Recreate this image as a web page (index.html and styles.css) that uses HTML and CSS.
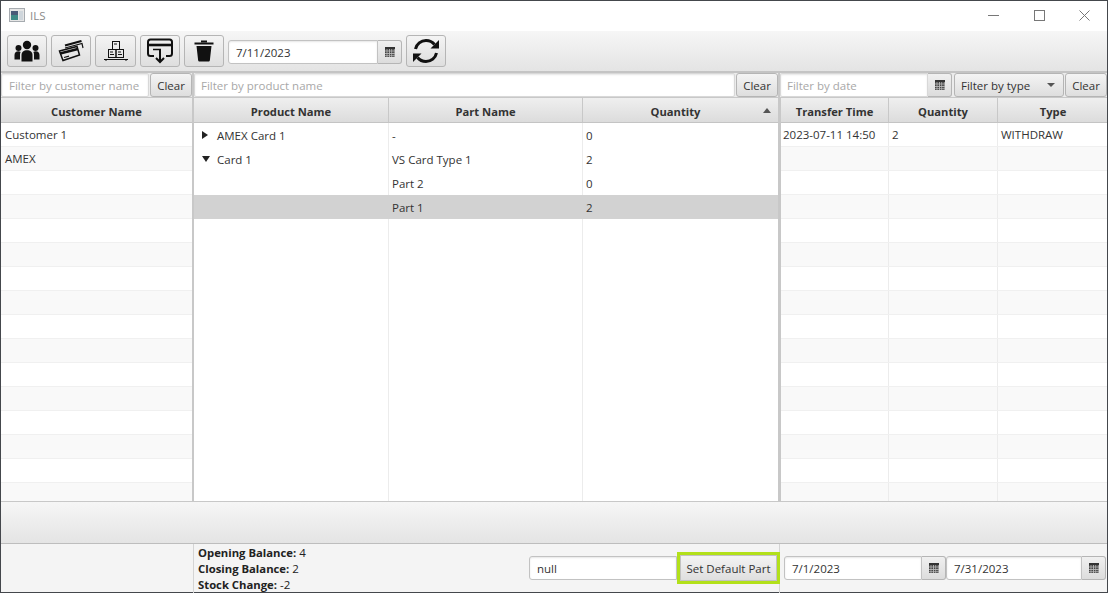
FILE: index.html
```html
<!DOCTYPE html>
<html lang="en">
<head>
<meta charset="utf-8">
<title>ILS</title>
<link rel="stylesheet" href="styles.css">
</head>
<body>
<svg class="defs" width="0" height="0" aria-hidden="true">
  <defs>
    <pattern id="calgrid" x="0" y="2" width="2.4" height="2.4" patternUnits="userSpaceOnUse"><rect width="1.6" height="1.6" fill="#444"/></pattern>
    <symbol id="cal" viewBox="0 0 10 10"><rect x="0" y="0" width="10" height="2" fill="#333"/><rect x="0" y="2" width="10" height="8" fill="#bbb"/><rect x="0" y="2" width="10" height="8" fill="url(#calgrid)"/></symbol>
  </defs>
</svg>
<div class="window">
  <header class="titlebar">
    <svg class="appicon" width="16" height="14" viewBox="0 0 16 14"><rect x="0.5" y="0.5" width="15" height="13" fill="#e6e6e6" stroke="#a6abb0"/><rect x="2" y="3" width="7" height="9" fill="#3f8a86"/><rect x="2" y="3" width="7" height="4" fill="#4a5a78"/><rect x="10" y="3" width="4" height="9" fill="#cfd6dc"/></svg>
    <span class="apptitle">ILS</span>
    <div class="winbtns">
      <svg width="11" height="11" viewBox="0 0 11 11"><path d="M0 5.500h11" stroke="#777" fill="none"/></svg>
      <svg width="11" height="11" viewBox="0 0 11 11"><rect x="0.500" y="0.500" width="10" height="10" stroke="#777" fill="none"/></svg>
      <svg width="11" height="11" viewBox="0 0 11 11"><path d="M0.500 0.500l10 10M10.500 0.500l-10 10" stroke="#777" fill="none"/></svg>
    </div>
  </header>

  <div class="toolbar">
    <button class="btn iconbtn w40">
      <svg width="26" height="22" viewBox="0 0 26 22" fill="#111"><circle cx="13" cy="5" r="4.200"/><circle cx="4.500" cy="8" r="3"/><circle cx="21.500" cy="8" r="3"/><path d="M7.500 21.500V15c0-3 2.200-4.700 5.500-4.700s5.500 1.700 5.500 4.700v6.500z"/><path d="M0.500 19.500V15c0-2.500 1.500-3.800 3.800-3.800 1 0 1.700.3 2.300.8C6 13 6 14 6 15v4.500z"/><path d="M25.500 19.500V15c0-2.500-1.500-3.800-3.800-3.800-1 0-1.700.3-2.300.8.600 1 .600 2 .600 3v4.500z"/></svg>
    </button>
    <button class="btn iconbtn w40">
      <svg width="26" height="22" viewBox="0 0 26 22" fill="none" stroke="#111"><path d="M7 5.500 23.500 1" stroke-width="2.200"/><path d="M7 8 24 3.500l1 4.500" stroke-width="1.200"/><path d="M1.500 11 19 6.500l2.500 8.500L5 20.500z" fill="#e8e8e8" stroke-width="1.500"/><path d="M2 13.500 19.800 9" stroke-width="2.500"/><path d="M6 17.500l5-1.300" stroke-width="1.200"/></svg>
    </button>
    <button class="btn iconbtn w41">
      <svg width="24" height="22" viewBox="0 0 24 22" fill="none" stroke="#111"><rect x="8.500" y="1.500" width="7" height="8"/><rect x="4.500" y="9.500" width="7.500" height="8"/><rect x="12" y="9.500" width="7.500" height="8"/><path d="M10 4h3M6 12h3M14 12h3M6 14.500h4M14 14.500h4M0 19.500h24M2 21v-1.500M22 21v-1.500"/></svg>
    </button>
    <button class="btn iconbtn w40">
      <svg width="26" height="26" viewBox="0 0 26 26" fill="none" stroke="#111" stroke-width="2"><path d="M7 18H3.500C2 18 1 17 1 15.500V4C1 2.500 2 1.500 3.500 1.500h19C24 1.500 25 2.500 25 4v11.500c0 1.500-1 2.500-2.500 2.500H19"/><path d="M1 7h24" stroke-width="2.600"/><path d="M6 11.500h8" stroke-width="1.500"/><path d="M13 11v13M9 20l4 4 4-4"/></svg>
    </button>
    <button class="btn iconbtn w40">
      <svg width="20" height="22" viewBox="0 0 20 22"><rect x="0.500" y="2.500" width="19" height="2" fill="#111"/><rect x="7" y="0.500" width="6" height="2" fill="#111"/><path d="M2.500 6h15l-1.600 14c-.1 1-.7 1.500-1.600 1.500H5.700c-.9 0-1.500-.5-1.600-1.500z" fill="#111"/></svg>
    </button>
    <div class="datepicker w174">
      <span class="field value">7/11/2023</span>
      <span class="calbtn"><svg class="calicon"><use href="#cal"/></svg></span>
    </div>
    <button class="btn iconbtn w40">
      <svg width="28" height="26" viewBox="0 0 28 26" fill="none" stroke="#111" stroke-width="3"><path d="M3.500 11C4.500 6 9 2.500 14 2.500c3.500 0 6.500 1.500 8.500 4"/><path d="M24.500 15c-1 5-5.500 8.500-10.500 8.500-3.500 0-6.500-1.500-8.500-4"/><path d="M27 2v8.500h-8.500z" fill="#111" stroke="none"/><path d="M1 24v-8.500h8.500z" fill="#111" stroke="none"/></svg>
    </button>
  </div>

  <main class="panes">
    <section class="pane">
      <div class="filters">
        <span class="field ghost grow">Filter by customer name</span>
        <button class="btn small clear">Clear</button>
      </div>
      <div class="thead cols-1">
        <span class="th">Customer Name</span>
      </div>
      <div class="tbody cols-1 striped">
        <div class="row"><span class="td">Customer 1</span></div>
        <div class="row"><span class="td">AMEX</span></div>
        <div class="row"></div><div class="row"></div><div class="row"></div><div class="row"></div>
        <div class="row"></div><div class="row"></div><div class="row"></div><div class="row"></div>
        <div class="row"></div><div class="row"></div><div class="row"></div><div class="row"></div>
        <div class="row"></div><div class="row"></div>
      </div>
    </section>

    <section class="pane">
      <div class="filters filters-mid">
        <span class="field ghost grow">Filter by product name</span>
        <button class="btn small clear">Clear</button>
      </div>
      <div class="thead cols-3">
        <span class="th">Product Name</span>
        <span class="th">Part Name</span>
        <span class="th sorted">Quantity<i class="sortarrow"></i></span>
      </div>
      <div class="tbody cols-3 plain">
        <div class="row"><span class="td tree"><i class="arrow right"></i>AMEX Card 1</span><span class="td">-</span><span class="td">0</span></div>
        <div class="row"><span class="td tree"><i class="arrow down"></i>Card 1</span><span class="td">VS Card Type 1</span><span class="td">2</span></div>
        <div class="row"><span class="td"></span><span class="td">Part 2</span><span class="td">0</span></div>
        <div class="row selected"><span class="td"></span><span class="td">Part 1</span><span class="td">2</span></div>
        <div class="row filler"><span class="td"></span><span class="td"></span><span class="td"></span></div>
      </div>
    </section>

    <section class="pane">
      <div class="filters filters-right">
        <span class="datepicker grow"><span class="field ghost">Filter by date</span><span class="calbtn"><svg class="calicon"><use href="#cal"/></svg></span></span>
        <button class="btn small typefilter">Filter by type<i class="caret"></i></button>
        <button class="btn small clear">Clear</button>
      </div>
      <div class="thead cols-r">
        <span class="th">Transfer Time</span>
        <span class="th">Quantity</span>
        <span class="th">Type</span>
      </div>
      <div class="tbody cols-r striped">
        <div class="row"><span class="td">2023-07-11 14:50</span><span class="td">2</span><span class="td">WITHDRAW</span></div>
        <div class="row"><span class="td"></span><span class="td"></span><span class="td"></span></div>
        <div class="row"><span class="td"></span><span class="td"></span><span class="td"></span></div>
        <div class="row"><span class="td"></span><span class="td"></span><span class="td"></span></div>
        <div class="row"><span class="td"></span><span class="td"></span><span class="td"></span></div>
        <div class="row"><span class="td"></span><span class="td"></span><span class="td"></span></div>
        <div class="row"><span class="td"></span><span class="td"></span><span class="td"></span></div>
        <div class="row"><span class="td"></span><span class="td"></span><span class="td"></span></div>
        <div class="row"><span class="td"></span><span class="td"></span><span class="td"></span></div>
        <div class="row"><span class="td"></span><span class="td"></span><span class="td"></span></div>
        <div class="row"><span class="td"></span><span class="td"></span><span class="td"></span></div>
        <div class="row"><span class="td"></span><span class="td"></span><span class="td"></span></div>
        <div class="row"><span class="td"></span><span class="td"></span><span class="td"></span></div>
        <div class="row"><span class="td"></span><span class="td"></span><span class="td"></span></div>
        <div class="row"><span class="td"></span><span class="td"></span><span class="td"></span></div>
        <div class="row"><span class="td"></span><span class="td"></span><span class="td"></span></div>
      </div>
    </section>
  </main>

  <div class="emptybar"></div>

  <footer class="footer">
    <div class="foot-left"></div>
    <div class="foot-mid">
      <div class="balances">
        <div><b>Opening Balance:</b> 4</div>
        <div><b>Closing Balance:</b> 2</div>
        <div><b>Stock Change:</b> -2</div>
      </div>
      <div class="defaultpart">
        <span class="field value nullfield">null</span>
        <button class="btn small focused">Set Default Part</button>
      </div>
    </div>
    <div class="foot-right">
      <div class="datepicker w162"><span class="field value">7/1/2023</span><span class="calbtn"><svg class="calicon"><use href="#cal"/></svg></span></div>
      <div class="datepicker w160"><span class="field value">7/31/2023</span><span class="calbtn"><svg class="calicon"><use href="#cal"/></svg></span></div>
    </div>
  </footer>
</div>
</body>
</html>
```
FILE: styles.css
```css
* { box-sizing: border-box; }
html, body { margin: 0; padding: 0; }
body {
  width: 1108px;
  height: 593px;
  overflow: hidden;
  font-family: "Open Sans", "Noto Sans", sans-serif;
  font-size: 11.5px;
  color: #333;
}
.defs { position: absolute; }
.window {
  width: 1108px;
  height: 593px;
  display: flex;
  flex-direction: column;
  border: 1px solid #44474c;
  background: #f4f4f4;
}
.titlebar {
  height: 30px;
  background: #fff;
  display: flex;
  align-items: center;
  padding: 0 0 2px 8px;
  flex: none;
}
.appicon { margin-right: 5px; }
.apptitle { color: #8a8a8a; font-size: 11.5px; }
.winbtns { margin-left: auto; display: flex; gap: 34.500px; padding-right: 17px; }
.toolbar {
  height: 42px;
  flex: none;
  display: flex;
  align-items: center;
  padding: 0 6px;
  gap: 4px;
  background: linear-gradient(#f6f6f6, #e4e4e4);
  border-bottom: 2px solid #c4c4c4;
}
.toolbar .datepicker { margin-top: 2px; }
.btn {
  font: inherit;
  color: #333;
  border: 1px solid #b5b5b5;
  border-radius: 3px;
  background: linear-gradient(#f4f4f4, #dedede);
  padding: 0;
  display: flex;
  align-items: center;
  justify-content: center;
}
.iconbtn { height: 32px; }
.w40 { width: 40px; }
.w41 { width: 41px; }
.field {
  display: flex;
  align-items: center;
  background: #fff;
  padding: 0 7px;
  min-width: 0;
  flex: 1;
  height: 100%;
  white-space: nowrap;
  border: 1px solid #c2c2c2;
  border-radius: 3px 0 0 3px;
  box-shadow: inset 0 1px 2px #e6e6e6;
}
.ghost { color: #a8a8a8; }
.value { color: #333; }
.datepicker {
  display: flex;
  height: 24px;
  flex: none;
}
.w174 { width: 174px; }
.w162 { width: 162px; }
.w160 { width: 160px; }
.calbtn {
  width: 24px;
  flex: none;
  display: flex;
  align-items: center;
  justify-content: center;
  border: 1px solid #b5b5b5;
  border-left: 0;
  border-radius: 0 3px 3px 0;
  background: linear-gradient(#f0f0f0, #dcdcdc);
}
.calicon { width: 10px; height: 10px; display: block; }
.panes {
  flex: none;
  height: 428px;
  display: grid;
  grid-template-columns: 193px 586px 1fr;
  background: #c8c8c8;
}
.pane {
  display: flex;
  flex-direction: column;
  min-width: 0;
  overflow: hidden;
  border-right: 2px solid #c8c8c8;
}
.pane:last-child { border-right: 0; padding-left: 1px; }
.filters {
  height: 24px;
  flex: none;
  display: flex;
  background: #ececec;
  gap: 1px;
}
.filters .field { border-radius: 2px; border-color: #d8d8d8; }
.filters-mid .field { padding: 0 6px; }
.filters-right { margin-left: -1px; }
.filters-right .field { padding: 0 6px; }
.filters-right .typefilter { width: 110px; margin-left: 1px; padding: 0 8px 0 6px; }
.grow { flex: 1; min-width: 0; }
.filters .datepicker { height: 24px; }
.filters .datepicker .field { border-radius: 2px 0 0 2px; }
.small { height: 100%; padding: 0 8px; white-space: nowrap; }
.clear { width: 42px; padding: 0; }
.typefilter { justify-content: flex-start; }
.caret {
  margin-left: auto;
  width: 0; height: 0;
  border-left: 4px solid transparent;
  border-right: 4px solid transparent;
  border-top: 4px solid #555;
}
.thead {
  height: 25px;
  flex: none;
  display: grid;
  margin-top: 1px;
  background: linear-gradient(#efefef, #dcdcdc);
  border-bottom: 1px solid #c4c4c4;
}
.th {
  display: flex;
  align-items: center;
  justify-content: center;
  font-weight: 700;
  font-size: 11.200px;
  color: #333;
  border-right: 1px solid #c8c8c8;
  padding-top: 2px;
  position: relative;
}
.th:last-child { border-right: 0; }
.sorted { padding-right: 10px; }
.sortarrow {
  position: absolute;
  right: 7px;
  top: 10px;
  width: 0; height: 0;
  border-left: 4.500px solid transparent;
  border-right: 4.500px solid transparent;
  border-bottom: 5px solid #555;
}
.cols-1 { grid-template-columns: 1fr; }
.cols-3 { grid-template-columns: 195px 194px 195px; }
.cols-r { grid-template-columns: 108px 109px 110px; }
.tbody {
  flex: 1;
  min-height: 0;
  overflow: hidden;
  background: #fff;
  display: flex;
  flex-direction: column;
}
.row {
  height: 24px;
  flex: none;
  display: grid;
  border-bottom: 1px solid #f0f0f0;
}
.tbody.cols-1 .row { grid-template-columns: 1fr; }
.tbody.cols-3 .row { grid-template-columns: 195px 194px 195px; border-bottom: 0; }
.tbody.cols-r .row { grid-template-columns: 108px 109px 110px; }
.striped .row:nth-child(even) { background: #f9f9f9; }
.td {
  display: flex;
  align-items: center;
  padding-left: 3px;
  border-right: 1px solid #ececec;
  white-space: nowrap;
  min-width: 0;
}
.td:last-child { border-right: 0; }
.cols-r .td:first-child { padding-left: 2px; }
.cols-1 .td { border-right: 0; padding-left: 4px; }
.selected { background: #d2d2d2; }
.selected .td { border-right-color: #d2d2d2; }
.filler { flex: 1; }
.tree { padding-left: 8px; }
.arrow { width: 0; height: 0; margin-right: 7px; flex: none; }
.arrow.right {
  border-top: 4px solid transparent;
  border-bottom: 4px solid transparent;
  border-left: 6px solid #222;
  margin-right: 9px;
}
.arrow.down {
  border-left: 4px solid transparent;
  border-right: 4px solid transparent;
  border-top: 6px solid #222;
}
.emptybar {
  height: 43px;
  flex: none;
  background: linear-gradient(#f6f6f6, #e4e4e4);
  border-top: 1px solid #c8c8c8;
  border-bottom: 1px solid #bdbdbd;
}
.footer {
  flex: 1;
  min-height: 0;
  display: grid;
  grid-template-columns: 193px 586px 1fr;
}
.foot-left { border-right: 1px solid #d4d4d4; }
.foot-mid {
  display: flex;
  align-items: center;
  justify-content: space-between;
  border-right: 1px solid #d4d4d4;
  padding-left: 4px;
  min-width: 0;
}
.balances { color: #222; line-height: 16px; padding-top: 1px; }
.balances b { font-size: 11.300px; }
.defaultpart { display: flex; height: 32px; align-items: center; margin: 0 -1px 1px 0; }
.nullfield {
  flex: none;
  width: 148px;
  height: 24px;
  border-radius: 3px 0 0 3px;
}
.focused {
  width: 103px;
  height: 32px;
  border: 3px solid #b2e01a;
  border-radius: 0;
  box-shadow: inset 0 0 0 1px #c2c2c2;
  padding: 0;
}
.foot-right {
  display: flex;
  align-items: center;
  padding: 0 0 1px 4px;
}
```
